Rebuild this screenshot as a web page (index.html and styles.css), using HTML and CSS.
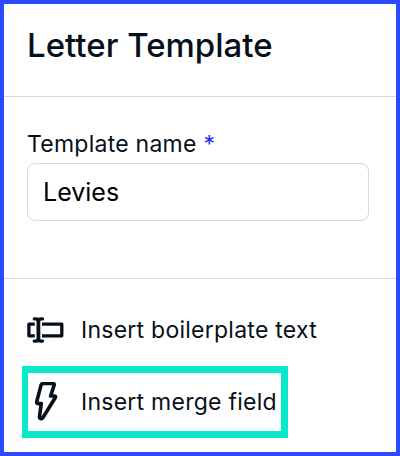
FILE: index.html
```html
<!DOCTYPE html>
<html lang="en">
<head>
    <meta charset="UTF-8">
    <meta name="viewport" content="width=device-width, initial-scale=1.0">
    <title>Letter Template</title>
    <link rel="stylesheet" href="styles.css">
</head>
<body>
    <div class="panel">
        <header class="panel-header">
            <h1>Letter Template</h1>
        </header>

        <section class="field">
            <label for="template-name">Template name <span class="required">*</span></label>
            <input type="text" id="template-name" value="Levies">
        </section>

        <nav class="actions">
            <button type="button" class="action">
                <svg class="icon" width="38" height="28" viewBox="0 0 38 28" fill="none" stroke="currentColor" stroke-width="3.300" stroke-linejoin="round">
                    <path d="M7.800 8.200H1.900v11.600h5.900M15 8.200h19.800v11.600H15"/>
                    <path stroke-width="3.800" d="M11.400 4v20"/>
                    <path stroke-linecap="round" d="M7.300 2.900h1.500q2.600 0 2.600 2M15.500 2.900H14q-2.600 0-2.600 2M7.300 25.100h1.500q2.600 0 2.600-2M15.500 25.100H14q-2.600 0-2.600-2"/>
                </svg>
                <span>Insert boilerplate text</span>
            </button>
            <button type="button" class="action highlighted">
                <svg class="icon" width="38" height="40" viewBox="0 0 38 40" fill="none" stroke="currentColor" stroke-width="3.600" stroke-linejoin="round">
                    <path d="M15.500 1.500h9.300q1.800 0 1.300 1.800L22.600 14h3.600q2 0 1 1.800L15 35.500q-1 1.600-2.500 1.100-1.300-.5-1-2.200L13.300 21.600H10.500q-2.200 0-1.700-2.200L13 3.300q.5-1.800 2.500-1.800z"/>
                </svg>
                <span>Insert merge field</span>
            </button>
        </nav>
    </div>
</body>
</html>
```
FILE: styles.css
```css
* {
    box-sizing: border-box;
}

body {
    margin: 0;
    font-family: Inter, "Liberation Sans", sans-serif;
    color: #06101a;
    background: #fff;
}

.panel {
    height: 456px;
    border: 4px solid #2b4dff;
}

.panel-header {
    height: 93px;
    padding: 19px 23px;
    border-bottom: 1px solid #d9d9d9;
}

h1 {
    margin: 0;
    font-size: 33px;
    line-height: 44px;
    font-weight: 500;
}

.field {
    height: 182px;
    padding: 33px 23px 0;
    border-bottom: 1px solid #d9d9d9;
}

.field label {
    display: block;
    font-size: 23px;
    line-height: 28px;
    letter-spacing: 0.25px;
    margin-bottom: 5px;
}

.required {
    color: #2b2bf5;
}

.field input {
    display: block;
    width: 342px;
    height: 58px;
    padding: 0 15px;
    border: 1px solid #d9d9d9;
    border-radius: 8px;
    font: inherit;
    font-size: 25px;
    color: #000;
}

.actions {
    display: flex;
    flex-direction: column;
    align-items: flex-start;
    padding: 15px 18px 0;
}

.action {
    display: flex;
    align-items: center;
    gap: 16px;
    height: 72px;
    padding: 0 5px;
    border: 0;
    background: none;
    font: inherit;
    font-size: 23px;
    letter-spacing: 0.25px;
    color: inherit;
}

.highlighted {
    width: 266px;
    padding: 0;
    gap: 15px;
    border: 7px solid #0ae8cc;
    border-left-width: 6px;
    white-space: nowrap;
}
```
